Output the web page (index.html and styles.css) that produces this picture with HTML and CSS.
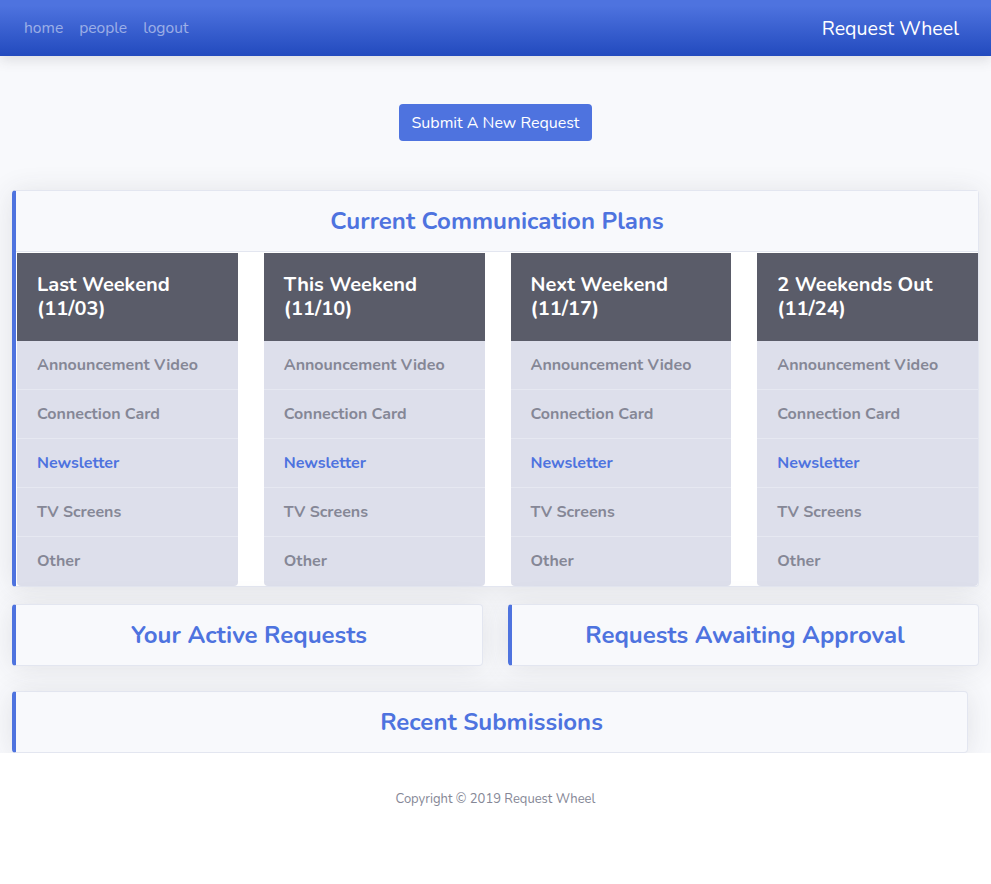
FILE: index.html
```html
<!DOCTYPE html>
<html lang="en">
<head>
<meta charset="utf-8">
<title>Request Wheel</title>
<link rel="stylesheet" href="styles.css">
</head>
<body>
<nav class="topbar">
  <div class="nav-links">
    <a href="#">home</a>
    <a href="#">people</a>
    <a href="#">logout</a>
  </div>
  <div class="brand">Request Wheel</div>
</nav>
<main class="content">
  <div class="action">
    <a class="btn" href="#">Submit A New Request</a>
  </div>

  <section class="card plans">
    <header class="card-header"><h2>Current Communication Plans</h2></header>
    <div class="weeks">
      <div class="week">
        <div class="week-title">Last Weekend<br>(11/03)</div>
        <ul class="items">
          <li>Announcement Video</li>
          <li>Connection Card</li>
          <li class="active">Newsletter</li>
          <li>TV Screens</li>
          <li>Other</li>
        </ul>
      </div>
      <div class="week">
        <div class="week-title">This Weekend<br>(11/10)</div>
        <ul class="items">
          <li>Announcement Video</li>
          <li>Connection Card</li>
          <li class="active">Newsletter</li>
          <li>TV Screens</li>
          <li>Other</li>
        </ul>
      </div>
      <div class="week">
        <div class="week-title">Next Weekend<br>(11/17)</div>
        <ul class="items">
          <li>Announcement Video</li>
          <li>Connection Card</li>
          <li class="active">Newsletter</li>
          <li>TV Screens</li>
          <li>Other</li>
        </ul>
      </div>
      <div class="week">
        <div class="week-title">2 Weekends Out<br>(11/24)</div>
        <ul class="items">
          <li>Announcement Video</li>
          <li>Connection Card</li>
          <li class="active">Newsletter</li>
          <li>TV Screens</li>
          <li>Other</li>
        </ul>
      </div>
    </div>
  </section>

  <div class="pair">
    <section class="card small"><h2>Your Active Requests</h2></section>
    <section class="card small"><h2>Requests Awaiting Approval</h2></section>
  </div>

  <section class="card small recent"><h2>Recent Submissions</h2></section>
</main>
<footer class="footer">Copyright © 2019 Request Wheel</footer>
</body>
</html>
```

FILE: styles.css
```css
* { box-sizing: border-box; }
html, body { margin: 0; padding: 0; }
body {
  font-family: "Nunito", "Lato", "Noto Sans", sans-serif;
  background: #fff;
  color: #858796;
  width: 991px;
}
.topbar {
  height: 56px;
  display: flex;
  align-items: center;
  justify-content: space-between;
  padding: 0 32px 0 24px;
  background: linear-gradient(180deg, #4e73df 10%, #224abe 100%);
  box-shadow: 0 4px 12px rgba(58, 59, 69, 0.15);
  position: relative;
  z-index: 2;
}
.nav-links { display: flex; gap: 16px; }
.nav-links a {
  color: rgba(255, 255, 255, 0.5);
  text-decoration: none;
  font-size: 15.6px;
}
.brand { color: #fff; font-size: 19.6px; }
.content {
  background: #f8f9fc;
  padding: 48px 12px 0 12px;
}
.action { display: flex; justify-content: center; margin-bottom: 49px; }
.btn {
  display: block;
  background: #4e73df;
  color: #fff;
  text-decoration: none;
  font-size: 16px;
  height: 37px;
  line-height: 38px;
  padding: 0 13px;
  border-radius: 4px;
}
.card {
  background: #f8f9fc;
  border: 1px solid #e3e6f0;
  border-left: 4px solid #4e73df;
  border-radius: 4px;
  box-shadow: 0 2px 28px 0 rgba(58, 59, 69, 0.12);
}
.card h2 {
  margin: 0;
  text-align: center;
  color: #4e73df;
  font-size: 24px;
  font-weight: 700;
  line-height: 29px;
}
.card-header {
  padding: 16px 0 15px;
  border-bottom: 1px solid #e3e6f0;
}
.plans { background: #fff; }
.plans .card-header { background: #f8f9fc; }
.weeks {
  display: grid;
  grid-template-columns: repeat(4, 1fr);
  column-gap: 26px;
  padding: 1px 0 0 1px;
}
.week-title {
  background: #5a5c69;
  color: #fff;
  font-size: 20px;
  font-weight: 700;
  line-height: 24px;
  height: 88px;
  padding: 20px 20px 0;
}
.items {
  list-style: none;
  margin: 0;
  padding: 0;
  background: #dddfeb;
  border-radius: 0 0 4px 4px;
}
.items li {
  height: 49px;
  line-height: 48px;
  padding: 0 20px;
  font-size: 16px;
  font-weight: 700;
  color: #858796;
  border-bottom: 1px solid #e6e8f1;
}
.items li:last-child { border-bottom: none; }
.items li.active { color: #4e73df; }
.pair {
  display: grid;
  grid-template-columns: 1fr 1fr;
  column-gap: 25px;
  margin-top: 17px;
}
.small { padding: 16px 0 15px; }
.recent { margin: 25px 11px 0 0; }
.footer {
  text-align: center;
  font-size: 13px;
  color: #858796;
  padding: 37px 0 72px;
  background: #fff;
}
```
